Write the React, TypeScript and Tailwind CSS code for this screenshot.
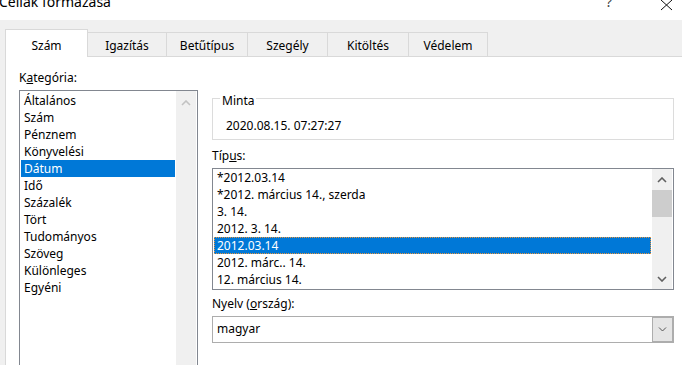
import React from 'react'

const categories = ['Általános', 'Szám', 'Pénznem', 'Könyvelési', 'Dátum', 'Idő', 'Százalék', 'Tört', 'Tudományos', 'Szöveg', 'Különleges', 'Egyéni']
const types = ['*2012.03.14', '*2012. március 14., szerda', '3. 14.', '2012. 3. 14.', '2012.03.14', '2012. márc.. 14.', '12. március 14.']
const tabs: [string, string][] = [
    ['Igazítás', 'w-[79px]'],
    ['Betűtípus', 'w-[81px]'],
    ['Szegély', 'w-[80px]'],
    ['Kitöltés', 'w-[81px]'],
    ['Védelem', 'w-[79px]'],
]

function Chevron({ up, color }: { up?: boolean; color: string }) {
    return (
        <svg width="10" height="6" viewBox="0 0 10 6">
            <polyline points={up ? '1,5 5,1 9,5' : '1,1 5,5 9,1'} fill="none" stroke={color} strokeWidth="1.6" />
        </svg>
    )
}

export default function App() {
    const font = { fontFamily: '"Noto Sans", "Open Sans", sans-serif' }

    return (
        <div style={font} className="w-[682px] h-[365px] overflow-hidden flex flex-col bg-[#f0f0f0] text-[12px] text-black">

            {/* Title bar */}
            <div className="h-[20px] bg-white flex items-start shrink-0 overflow-hidden">
                <div className="text-[14px] leading-none mt-[-5px] ml-[-1px] flex-1">Cellák formázása</div>
                <div className="text-[14px] leading-none mt-[-5px] text-[#444] mr-[48px]">?</div>
                <svg width="13" height="11" viewBox="0 0 13 11" className="mt-[0px] mr-[9px]">
                    <line x1="1" y1="0" x2="12" y2="10" stroke="#111" strokeWidth="1" />
                    <line x1="12" y1="0" x2="1" y2="10" stroke="#111" strokeWidth="1" />
                </svg>
            </div>

            {/* Tabs */}
            <div className="pl-[5px] flex flex-col flex-1">
                <div className="h-[36px] flex items-end shrink-0">
                    <div className="relative z-10 -mb-px w-[83px] h-[28px] bg-white border-x border-t border-[#d9d9d9] text-center pt-[7px] leading-[17px]">Szám</div>
                    {tabs.map(([t, w]) => (
                        <div key={t} className={`${w} h-[24px] border-t border-r border-[#d9d9d9] text-center pt-[4px] leading-[17px]`}>{t}</div>
                    ))}
                </div>

                {/* Panel */}
                <div className="flex-1 bg-white border-l border-t border-[#d9d9d9] flex">

                    {/* Left: Kategória */}
                    <div className="ml-[13px] w-[179px] pt-[12px] shrink-0">
                        <div className="leading-[17px] h-[17px]">K<u>a</u>tegória:</div>
                        <div className="mt-[4px] h-[300px] border border-[#828790] flex pr-[1px]">
                            <div className="flex-1 pt-[1px] px-[1px]">
                                {categories.map(c => (
                                    <div key={c} className={`h-[17px] leading-[17px] pl-[3px] ${c === 'Dátum' ? 'bg-[#0078d7] text-white' : ''}`}>{c}</div>
                                ))}
                            </div>
                            <div className="w-[20px] bg-[#f0f0f0] flex flex-col items-center pt-[9px]">
                                <Chevron up color="#c2c2c2" />
                            </div>
                        </div>
                    </div>

                    {/* Right */}
                    <div className="ml-[14px] w-[462px] shrink-0 pt-[41px]">
                        {/* Minta */}
                        <div className="relative h-[42px] border border-[#dcdcdc] pl-[13px] pt-[18px]">
                            <div className="absolute left-[7px] -top-[7px] bg-white px-[2px] leading-[17px]">Minta</div>
                            <div className="leading-[17px]">2020.08.15. 07:27:27</div>
                        </div>

                        <div className="mt-[7px] leading-[17px] h-[17px]">Típ<u>u</u>s:</div>

                        {/* Típus list */}
                        <div className="mt-[4px] h-[122px] border border-[#828790] flex pr-[1px]">
                            <div className="flex-1 px-[1px]">
                                {types.map(t => (
                                    <div key={t} className={`h-[17px] leading-[17px] pl-[3px] ${t === '2012.03.14' ? 'bg-[#0078d7] text-white outline outline-1 outline-dotted outline-[#e8953c] -outline-offset-1' : ''}`}>{t}</div>
                                ))}
                            </div>
                            <div className="w-[20px] bg-[#f0f0f0] flex flex-col items-center">
                                <div className="h-[21px] flex items-center justify-center"><Chevron up color="#606060" /></div>
                                <div className="w-full h-[27px] bg-[#cdcdcd]"></div>
                                <div className="flex-1"></div>
                                <div className="h-[21px] flex items-center justify-center"><Chevron color="#606060" /></div>
                            </div>
                        </div>

                        <div className="mt-[5px] leading-[17px] h-[17px]">Nyelv (<u>o</u>rszág):</div>

                        {/* Combo */}
                        <div className="mt-[4px] h-[27px] border border-[#adadad] flex">
                            <div className="flex-1 pl-[4px] pt-[3px] leading-[17px]">magyar</div>
                            <div className="w-[21px] h-full border border-[#adadad] bg-[#e5e5e5] flex items-center justify-center">
                                <svg width="9" height="5" viewBox="0 0 9 5">
                                    <polyline points="1,0.5 4.5,4 8,0.5" fill="none" stroke="#555" strokeWidth="1" />
                                </svg>
                            </div>
                        </div>
                    </div>
                </div>
            </div>
        </div>
    )
}
